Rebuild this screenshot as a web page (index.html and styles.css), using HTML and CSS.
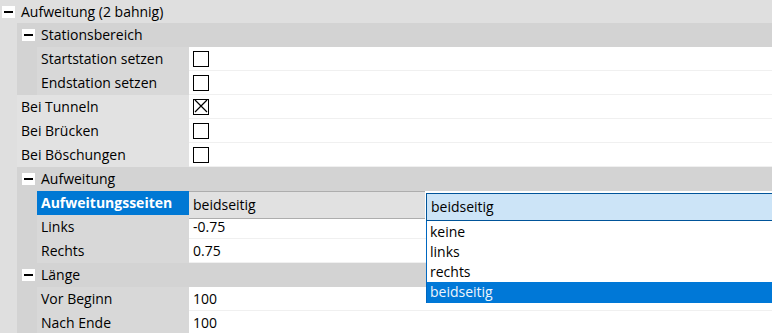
FILE: index.html
```html
<!DOCTYPE html>
<html lang="de">
<head>
  <meta charset="UTF-8">
  <title>Eigenschaften</title>
  <link rel="stylesheet" href="styles.css">
</head>
<body>
  <div class="grid">
    <div class="row top">
      <span class="toggle"></span>
      <span class="caption">Aufweitung (2 bahnig)</span>
    </div>

    <div class="row">
      <span class="strip"></span>
      <div class="group">
        <span class="toggle"></span>
        <span class="caption">Stationsbereich</span>
      </div>
    </div>
    <div class="row">
      <span class="strip"></span><span class="strip2"></span>
      <div class="label l2">Startstation setzen</div>
      <div class="value"><span class="check"></span></div>
    </div>
    <div class="row">
      <span class="strip"></span><span class="strip2"></span>
      <div class="label l2">Endstation setzen</div>
      <div class="value"><span class="check"></span></div>
    </div>

    <div class="row">
      <span class="strip"></span>
      <div class="label l1">Bei Tunneln</div>
      <div class="value">
        <span class="check checked">
          <svg width="16" height="16" viewBox="0 0 16 16"><path d="M2 2 L14 14 M14 2 L2 14" stroke="#000" stroke-width="1.2" fill="none"/></svg>
        </span>
      </div>
    </div>
    <div class="row">
      <span class="strip"></span>
      <div class="label l1">Bei Brücken</div>
      <div class="value"><span class="check"></span></div>
    </div>
    <div class="row">
      <span class="strip"></span>
      <div class="label l1">Bei Böschungen</div>
      <div class="value"><span class="check"></span></div>
    </div>

    <div class="row">
      <span class="strip"></span>
      <div class="group">
        <span class="toggle"></span>
        <span class="caption">Aufweitung</span>
      </div>
    </div>
    <div class="row">
      <span class="strip"></span><span class="strip2"></span>
      <div class="label l2 selected">Aufweitungsseiten</div>
      <div class="value editing">
        <div class="editor">beidseitig</div>
        <div class="combo">beidseitig</div>
        <ul class="droplist">
          <li>keine</li>
          <li>links</li>
          <li>rechts</li>
          <li class="active">beidseitig</li>
        </ul>
      </div>
    </div>
    <div class="row">
      <span class="strip"></span><span class="strip2"></span>
      <div class="label l2">Links</div>
      <div class="value">-0.75</div>
    </div>
    <div class="row">
      <span class="strip"></span><span class="strip2"></span>
      <div class="label l2">Rechts</div>
      <div class="value">0.75</div>
    </div>

    <div class="row">
      <span class="strip"></span>
      <div class="group">
        <span class="toggle"></span>
        <span class="caption">Länge</span>
      </div>
    </div>
    <div class="row">
      <span class="strip"></span><span class="strip2"></span>
      <div class="label l2">Vor Beginn</div>
      <div class="value">100</div>
    </div>
    <div class="row">
      <span class="strip"></span><span class="strip2"></span>
      <div class="label l2">Nach Ende</div>
      <div class="value">100</div>
    </div>
  </div>
</body>
</html>
```

FILE: styles.css
```css
body {
  margin: 0;
  font-family: "Open Sans", "Noto Sans", sans-serif;
  font-size: 14px;
  color: #000;
  background-color: #fff;
  overflow: hidden;
}
.grid {
  width: 772px;
}
.row {
  display: flex;
  height: 24px;
  line-height: 24px;
}
.row.top {
  height: 23px;
  line-height: 23px;
  align-items: center;
  background-color: #dfdfdf;
}
.row.top .toggle {
  margin-left: 2px;
}
.row.top .caption {
  margin-left: 6px;
}
.strip {
  flex: 0 0 17px;
  background-color: #dfdfdf;
}
.strip2 {
  flex: 0 0 20px;
  background-color: #d3d3d3;
}
.group {
  flex: 1;
  display: flex;
  align-items: center;
  background-color: #d3d3d3;
}
.group .toggle {
  margin-left: 5px;
}
.group .caption {
  margin-left: 6px;
}
.toggle {
  position: relative;
  display: inline-block;
  width: 13px;
  height: 12px;
  background-color: #fff;
}
.toggle::after {
  content: "";
  position: absolute;
  left: 2px;
  top: 5px;
  width: 9px;
  height: 2px;
  background-color: #000;
}
.label {
  padding-left: 4px;
  white-space: nowrap;
  box-sizing: border-box;
}
.label.l1 {
  flex: 0 0 172px;
  background-color: #e2e2e2;
}
.label.l2 {
  flex: 0 0 152px;
  background-color: #d8d8d8;
}
.label.selected {
  background-color: #0078d4;
  color: #fff;
  font-weight: bold;
}
.value {
  flex: 1;
  padding-left: 4px;
  background-color: #fff;
  border-bottom: 1px solid #f0f0f0;
  box-sizing: border-box;
  display: flex;
  align-items: center;
}
.check {
  display: inline-block;
  width: 16px;
  height: 16px;
  border: 1.5px solid #000;
  box-sizing: border-box;
  position: relative;
}
.check svg {
  position: absolute;
  left: -1.5px;
  top: -1.5px;
}
.value.editing {
  position: relative;
  border-bottom: none;
}
.editor {
  position: absolute;
  left: 0;
  top: 0;
  width: 236px;
  height: 28px;
  line-height: 26px;
  padding-left: 4px;
  box-sizing: border-box;
  background-color: #e1e1e1;
  border-top: 1px solid #adadad;
  border-bottom: 1px solid #adadad;
  z-index: 2;
}
.combo {
  position: absolute;
  left: 237px;
  top: 2px;
  width: 360px;
  height: 28px;
  line-height: 26px;
  padding-left: 4px;
  box-sizing: border-box;
  background-color: #cce4f7;
  border: 1px solid #005499;
  z-index: 3;
}
.droplist {
  position: absolute;
  left: 237px;
  top: 30px;
  width: 360px;
  margin: 0;
  padding: 1px 0 0;
  list-style: none;
  background-color: #fff;
  border-left: 1px solid #0067c0;
  z-index: 3;
}
.droplist li {
  height: 20px;
  line-height: 20px;
  padding-left: 3px;
}
.droplist li.active {
  height: 21px;
  background-color: #0078d7;
  color: #eef5fc;
}
```
